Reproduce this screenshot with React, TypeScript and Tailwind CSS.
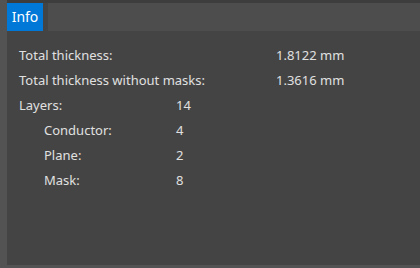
export default function App() {
  const font = { fontFamily: '"Noto Sans", "Open Sans", sans-serif' };
  return (
    <div className="w-[420px] h-[268px] bg-[#535353] flex flex-col" style={font}>
      <div className="h-[3px] bg-[#3d3d3d] ml-[7px]" />
      <div className="flex flex-1 ml-[7px] flex-col">
        <div className="flex h-[28px]">
          <div className="w-[36px] bg-[#0078d7] text-white text-[14px] flex items-center justify-center pb-[1px]">Info</div>
          <div className="w-[5px] bg-[#444444]" />
          <div className="flex-1 bg-[#4d4d4d]" />
        </div>
        <div className="h-[234px] bg-[#444444] text-[#e0e0e0] text-[13px] pt-[12px] pl-[12px]">
          <div className="flex h-[25px] items-center"><span className="w-[257px]">Total thickness:</span><span>1.8122 mm</span></div>
          <div className="flex h-[25px] items-center"><span className="w-[257px]">Total thickness without masks:</span><span>1.3616 mm</span></div>
          <div className="flex h-[25px] items-center"><span className="w-[157px]">Layers:</span><span>14</span></div>
          <div className="flex h-[25px] items-center pl-[25px]"><span className="w-[132px]">Conductor:</span><span>4</span></div>
          <div className="flex h-[25px] items-center pl-[25px]"><span className="w-[132px]">Plane:</span><span>2</span></div>
          <div className="flex h-[25px] items-center pl-[25px]"><span className="w-[132px]">Mask:</span><span>8</span></div>
        </div>
      </div>
    </div>
  );
}
